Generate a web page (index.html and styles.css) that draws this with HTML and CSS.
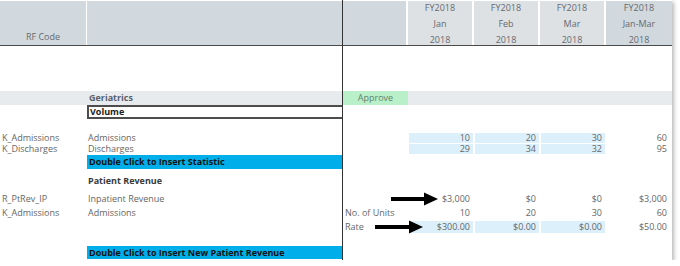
FILE: index.html
```html
<!DOCTYPE html>
<html>
<head>
<meta charset="utf-8">
<link rel="stylesheet" href="styles.css">
</head>
<body>
<div class="sheet">
  <div class="pane left">
    <div class="head lcols">
      <div class="hc"><span></span><span></span><span>RF Code</span></div>
      <div class="hc"></div>
    </div>
    <div class="sp s45"></div>
    <div class="row lcols h14 band">
      <div></div>
      <div class="t2 b grp">Geriatrics</div>
    </div>
    <div class="row lcols h14">
      <div></div>
      <div class="volume">Volume</div>
    </div>
    <div class="sp s13"></div>
    <div class="row lcols h11">
      <div class="t1">K_Admissions</div>
      <div class="t2">Admissions</div>
    </div>
    <div class="row lcols h11">
      <div class="t1">K_Discharges</div>
      <div class="t2">Discharges</div>
    </div>
    <div class="sp s1"></div>
    <div class="row lcols h14">
      <div></div>
      <div class="insert">Double Click to Insert Statistic</div>
    </div>
    <div class="sp s5"></div>
    <div class="row lcols h14">
      <div></div>
      <div class="t2 b sec">Patient Revenue</div>
    </div>
    <div class="sp s4"></div>
    <div class="row lcols h14">
      <div class="t1">R_PtRev_IP</div>
      <div class="t2">Inpatient Revenue</div>
    </div>
    <div class="row lcols h14">
      <div class="t1">K_Admissions</div>
      <div class="t2">Admissions</div>
    </div>
    <div class="row lcols h14"></div>
    <div class="sp s12"></div>
    <div class="row lcols h13">
      <div></div>
      <div class="insert">Double Click to Insert New Patient Revenue</div>
    </div>
  </div>

  <div class="pane right">
    <div class="head rcols">
      <div class="hc"></div>
      <div class="hc light"><span>FY2018</span><span>Jan</span><span>2018</span></div>
      <div class="hc light"><span>FY2018</span><span>Feb</span><span>2018</span></div>
      <div class="hc light"><span>FY2018</span><span>Mar</span><span>2018</span></div>
      <div class="hc last"><span>FY2018</span><span>Jan-Mar</span><span>2018</span></div>
    </div>
    <div class="sp s45"></div>
    <div class="row rcols h14 band">
      <div class="approve">Approve</div>
      <div></div><div></div><div></div><div></div>
    </div>
    <div class="row rcols h14"></div>
    <div class="sp s13"></div>
    <div class="row rcols h11">
      <div></div>
      <div class="num in">10</div>
      <div class="num in">20</div>
      <div class="num in">30</div>
      <div class="num tot">60</div>
    </div>
    <div class="row rcols h11">
      <div></div>
      <div class="num in">29</div>
      <div class="num in">34</div>
      <div class="num in">32</div>
      <div class="num tot">95</div>
    </div>
    <div class="sp s1"></div>
    <div class="row rcols h14"></div>
    <div class="sp s5"></div>
    <div class="row rcols h14"></div>
    <div class="sp s4"></div>
    <div class="row rcols h14">
      <div></div>
      <div class="num">$3,000</div>
      <div class="num">$0</div>
      <div class="num">$0</div>
      <div class="num tot">$3,000</div>
    </div>
    <div class="row rcols h14">
      <div class="t3">No. of Units</div>
      <div class="num">10</div>
      <div class="num">20</div>
      <div class="num">30</div>
      <div class="num tot">60</div>
    </div>
    <div class="row rcols h14">
      <div class="t3">Rate</div>
      <div class="num in pad">$300.00</div>
      <div class="num in pad">$0.00</div>
      <div class="num in pad">$0.00</div>
      <div class="num tot">$50.00</div>
    </div>
    <div class="sp s12"></div>
    <div class="row rcols h13"></div>
  </div>

  <svg class="arrow a1" width="47" height="14" viewBox="0 0 47 14">
    <rect x="0" y="5" width="35" height="4" fill="#000"/>
    <polygon points="33,0.5 47,7 33,13.5" fill="#000"/>
  </svg>
  <svg class="arrow a2" width="48" height="14" viewBox="0 0 48 14">
    <rect x="0" y="5" width="36" height="4" fill="#000"/>
    <polygon points="34,0.5 48,7 34,13.5" fill="#000"/>
  </svg>
</div>
</body>
</html>
```

FILE: styles.css
```css
html, body {
  margin: 0;
  padding: 0;
  background: #ffffff;
}

body {
  font-family: "Open Sans", "Noto Sans", sans-serif;
  font-size: 9px;
  color: #666666;
}

.sheet {
  position: relative;
  display: flex;
  width: 672px;
  height: 260px;
  background: #ffffff;
  box-shadow: 2px 2px 4px rgba(0, 0, 0, 0.28);
}

.pane {
  display: flex;
  flex-direction: column;
}

.left {
  width: 342px;
  border-right: 1px solid #333333;
}

.right {
  width: 329px;
}

.lcols {
  display: grid;
  grid-template-columns: 87px 255px;
}

.rcols {
  display: grid;
  grid-template-columns: 65px 66px 66px 66px 66px;
}

.head {
  height: 44px;
  padding-top: 1px;
  border-bottom: 1px solid #4a4a4a;
}

.hc {
  display: flex;
  flex-direction: column;
  align-items: center;
  background: #d1d9de;
  margin-right: 2px;
  line-height: 16px;
  color: #666a6e;
  overflow: hidden;
}

.hc span {
  display: block;
  height: 16px;
}

.hc span:first-child {
  margin-top: -1px;
}

.hc.light {
  background: #dde1e4;
}

.hc.last {
  margin-right: 0;
}

.left .hc:last-child {
  margin-right: 0;
}

.left .hc:first-child {
  margin-right: 1px;
}

.right .hc:first-child {
  margin-right: 2px;
}

.sp { flex: none; }
.s45 { height: 45px; }
.s13 { height: 13px; }
.s12 { height: 12px; }
.s5 { height: 5px; }
.s4 { height: 4px; }
.s1 { height: 1px; }

.row { flex: none; }
.h14 { height: 14px; line-height: 14px; }
.h13 { height: 13px; line-height: 13px; }
.h11 { height: 11px; line-height: 11px; }

.band {
  background: #e8ebed;
}

.t1 {
  padding-left: 2px;
  white-space: nowrap;
}

.t2 {
  padding-left: 1px;
  white-space: nowrap;
}

.t3 {
  padding-left: 2px;
  white-space: nowrap;
}

.b {
  font-weight: 700;
}

.grp {
  color: #58606a;
  padding-left: 2px;
}

.sec {
  color: #3a3a3a;
}

.volume {
  box-sizing: border-box;
  border: 2px solid #4d4d4d;
  border-right-width: 0;
  font-weight: 700;
  color: #222222;
  padding-left: 1px;
  line-height: 10px;
}

.insert {
  background: #00aeea;
  color: #111111;
  font-weight: 700;
  padding-left: 2px;
  white-space: nowrap;
}

.approve {
  background: #baf0c9;
  color: #5f8370;
  text-align: center;
}

.num {
  text-align: right;
  padding-right: 4px;
  white-space: nowrap;
}

.num.tot {
  padding-right: 5px;
}

.num.in {
  background: #dcf0fb;
  margin: 1px 1px 0 1px;
  padding-right: 3px;
  line-height: 10px;
}

.num.in.pad {
  margin: 1px 1px 1px 1px;
  line-height: 12px;
}

.arrow {
  position: absolute;
  display: block;
}

.a1 {
  left: 391px;
  top: 192px;
}

.a2 {
  left: 375px;
  top: 220px;
}
```
